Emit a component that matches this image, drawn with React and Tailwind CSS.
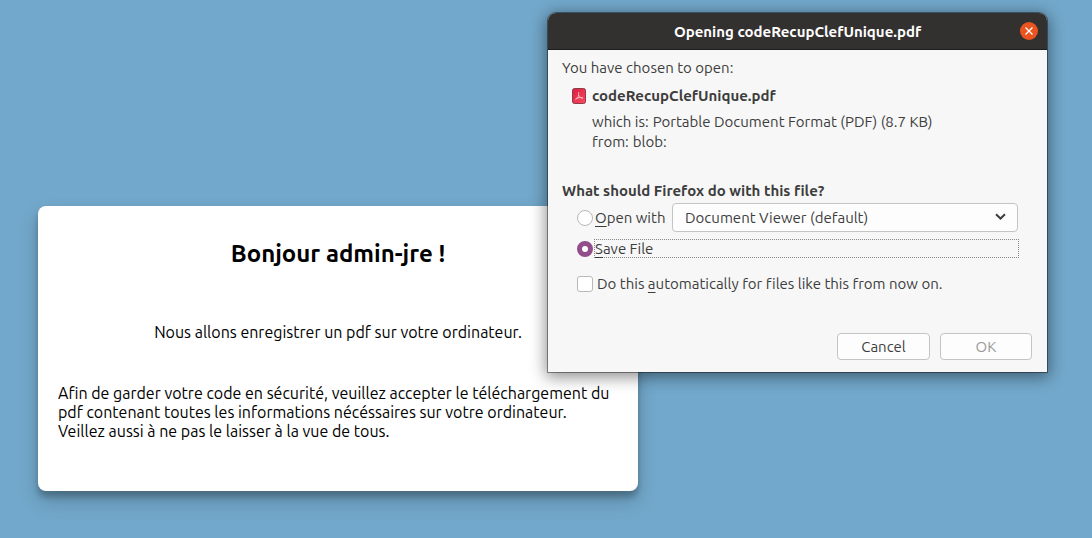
function PdfIcon() {
  return (
    <svg className="h-4 w-[14px] shrink-0" viewBox="0 0 14 16" fill="none" aria-hidden="true">
      <defs>
        <linearGradient id="pdf-fill" x1="0" y1="0" x2="1" y2="1">
          <stop offset="0" stopColor="#d81f40" />
          <stop offset="1" stopColor="#fb4a62" />
        </linearGradient>
      </defs>
      <rect x="0.5" y="0.5" width="13" height="15" rx="2" fill="url(#pdf-fill)" stroke="#8e3a48" />
      <path
        d="M6.500 4.200C6.800 5.500 6.800 7 6.400 8.200 5.800 9.800 4.800 11.200 3.400 11.800M6.700 7.200C7.500 8.700 8.900 10.200 10.800 10.400M3.600 10.800C5.500 9.700 8.200 9.300 10.900 9.900"
        stroke="#ffd0d6"
        strokeWidth="0.8"
      />
    </svg>
  );
}

function Radio({ id, defaultChecked }) {
  return (
    <input
      id={id}
      type="radio"
      name="action"
      defaultChecked={defaultChecked}
      className="size-4 shrink-0 appearance-none rounded-full border border-[#b8b8b8] bg-white outline-none checked:border-[5px] checked:border-[#924d8b]"
    />
  );
}

function Key({ children }) {
  return <span className="underline decoration-1 underline-offset-3">{children}</span>;
}

function DownloadDialog() {
  return (
    <div
      role="dialog"
      aria-labelledby="dialog-title"
      className="absolute top-[13px] right-[45px] w-[499px] rounded-t-lg bg-[#f7f7f7] text-[15px] leading-[21px] text-[#3d3d3d] shadow-[0_0_0_1px_rgba(0,0,0,0.4),0_3px_16px_2px_rgba(0,0,0,0.45)] [font-variant-ligatures:none]"
    >
      <header className="relative flex h-[37px] items-center justify-center rounded-t-lg border-b border-[#1d1b1b] bg-[#333030] text-white">
        <h2 id="dialog-title" className="font-bold">Opening codeRecupClefUnique.pdf</h2>
        <button
          type="button"
          aria-label="Close"
          className="absolute right-[9px] flex size-[18px] items-center justify-center rounded-full bg-[#e95420]"
        >
          <svg className="size-2" viewBox="0 0 8 8" stroke="#fff" strokeWidth="1.300" aria-hidden="true">
            <path d="M0.500 0.500l7 7M7.500 0.500l-7 7" />
          </svg>
        </button>
      </header>

      <form className="px-[14px] pt-2 pb-3" onSubmit={(e) => e.preventDefault()}>
        <p className="leading-5">You have chosen to open:</p>
        <div className="mt-2 flex items-center gap-[6px] pl-[10px] leading-5">
          <PdfIcon />
          <strong>codeRecupClefUnique.pdf</strong>
        </div>
        <dl className="mt-[6px] pl-[30px] leading-5">
          <div className="flex gap-1">
            <dt>which is:</dt>
            <dd>Portable Document Format (PDF) (8.7 KB)</dd>
          </div>
          <div className="flex gap-1">
            <dt>from:</dt>
            <dd>blob:</dd>
          </div>
        </dl>

        <fieldset className="mt-[29px]">
          <legend className="leading-5 font-bold">What should Firefox do with this file?</legend>
          <div className="mt-[2px] pl-[15px]">
            <div className="flex items-center">
              <Radio id="open-with" />
              <label htmlFor="open-with" className="w-[79px] shrink-0 pl-[2px]">
                <Key>O</Key>pen with
              </label>
              <div className="relative mr-[15px] grow">
                <select
                  aria-label="Application"
                  className="block h-[29px] w-full appearance-none rounded-[4px] border border-[#c4c4c4] bg-[#fdfdfd] px-3"
                >
                  <option>Document Viewer (default)</option>
                </select>
                <svg
                  className="pointer-events-none absolute top-[10px] right-3 h-2 w-[11px]"
                  viewBox="0 0 11 8"
                  fill="none"
                  stroke="#3d3d3d"
                  strokeWidth="2"
                  aria-hidden="true"
                >
                  <path d="M1 1.200l4.500 4.300L10 1.200" />
                </svg>
              </div>
            </div>
            <div className="mt-[7px] flex items-center">
              <Radio id="save-file" defaultChecked />
              <label
                htmlFor="save-file"
                className="mr-[14px] ml-px grow border border-dotted border-[#888] leading-[17px]"
              >
                <Key>S</Key>ave File
              </label>
            </div>
          </div>
        </fieldset>

        <div className="mt-4 flex items-center pl-[15px] leading-5">
          <input
            id="always"
            type="checkbox"
            className="size-4 shrink-0 appearance-none rounded-[3px] border border-[#b8b8b8] bg-white checked:bg-[#924d8b]"
          />
          <label htmlFor="always" className="pl-1">
            Do this <Key>a</Key>utomatically for files like this from now on.
          </label>
        </div>

        <div className="mt-[39px] flex justify-end gap-[10px] pr-px">
          <button type="button" className="h-[27px] w-[93px] rounded-[4px] border border-[#c4c4c4] bg-[#fdfdfd]">
            Cancel
          </button>
          <button
            type="submit"
            disabled
            className="h-[27px] w-[92px] rounded-[4px] border border-[#c4c4c4] bg-[#fdfdfd] text-[#999]"
          >
            OK
          </button>
        </div>
      </form>
    </div>
  );
}

export default function App() {
  return (
    <div className="relative min-h-screen bg-[#72a8cb] font-['Ubuntu','Noto_Sans',sans-serif]">
      <main className="px-[38px] pt-[206px] pb-12">
        <section className="max-w-[600px] rounded-lg bg-white px-5 pt-8 pb-[50px] text-base leading-[19px] text-black shadow-[0_10px_20px_rgba(0,0,0,0.19),0_6px_6px_rgba(0,0,0,0.23)]">
          <h1 className="text-center text-2xl leading-8 font-bold">Bonjour admin-jre !</h1>
          <p className="mt-[53px] text-center">Nous allons enregistrer un pdf sur votre ordinateur.</p>
          <p className="mt-[42px]">
            Afin de garder votre code en sécurité, veuillez accepter le téléchargement du
            <br />
            pdf contenant toutes les informations nécéssaires sur votre ordinateur.
            <br />
            Veillez aussi à ne pas le laisser à la vue de tous.
          </p>
        </section>
      </main>
      <DownloadDialog />
    </div>
  );
}
